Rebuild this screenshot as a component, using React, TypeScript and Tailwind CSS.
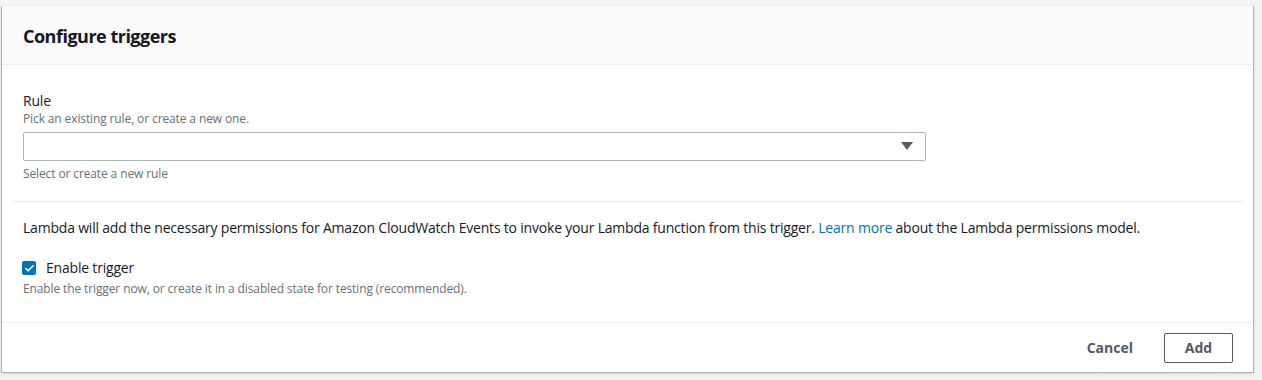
import { Check } from 'lucide-react'

export default function App() {
  return (
    <div
      className="w-[1262px] h-[380px] bg-[#f2f3f3] pt-[6px] pl-[1px] pr-[8px] text-[#16191f]"
      style={{ fontFamily: '"Open Sans", "Noto Sans", sans-serif' }}
    >
      <div className="bg-white border border-[#aab7b8] border-t-0 shadow-sm h-[367px] flex flex-col">
        {/* header */}
        <div className="h-[59px] bg-[#fafafa] border-b border-[#eaeded] flex items-center px-[21px] pt-[3px]">
          <h2 className="text-[18px] font-bold tracking-[-0.5px]">Configure triggers</h2>
        </div>

        {/* body */}
        <div className="flex-1 pl-[10px] pr-[9px]">
          <div className="px-[11px] pt-[26px] pb-[19px] border-b border-[#eaeded]">
            <div className="text-[14px] leading-[20px] tracking-[-0.2px]">Rule</div>
            <div className="text-[12px] leading-[16px] tracking-[-0.12px] text-[#687078]">Pick an existing rule, or create a new one.</div>
            <div className="mt-[5px] w-[903px] h-[29px] border border-[#aab7b8] rounded-[2px] flex items-center justify-end pr-[12px]">
              <svg width="12" height="9" viewBox="0 0 12 9">
                <path d="M0 0 H12 L6 8 Z" fill="#545b64" />
              </svg>
            </div>
            <div className="mt-[5px] text-[12px] leading-[16px] tracking-[-0.12px] text-[#687078]">Select or create a new rule</div>
          </div>

          <div className="px-[11px] pt-[16px]">
            <p className="text-[14px] leading-[20px] tracking-[-0.2px]">
              Lambda will add the necessary permissions for Amazon CloudWatch Events to invoke your Lambda function from this trigger.{' '}
              <a className="text-[#0073bb]">Learn more</a> about the Lambda permissions model.
            </p>
            <div className="mt-[20px] flex items-center gap-[10px]">
              <div className="w-[14px] h-[14px] ml-[-1px] rounded-[2px] bg-[#0073bb] flex items-center justify-center">
                <Check size={11} strokeWidth={3.5} className="text-white" />
              </div>
              <span className="text-[14px] leading-[20px] tracking-[-0.2px]">Enable trigger</span>
            </div>
            <div className="mt-[3px] text-[12px] leading-[16px] tracking-[-0.12px] text-[#687078]">
              Enable the trigger now, or create it in a disabled state for testing (recommended).
            </div>
          </div>
        </div>

        {/* footer */}
        <div className="h-[50px] border-t border-[#eaeded] flex items-center justify-end gap-[31px] pr-[20px]">
          <button className="text-[14px] font-bold text-[#545b64]">Cancel</button>
          <button className="w-[69px] h-[30px] border border-[#545b64] rounded-[2px] text-[14px] font-bold text-[#545b64]">
            Add
          </button>
        </div>
      </div>
    </div>
  )
}
